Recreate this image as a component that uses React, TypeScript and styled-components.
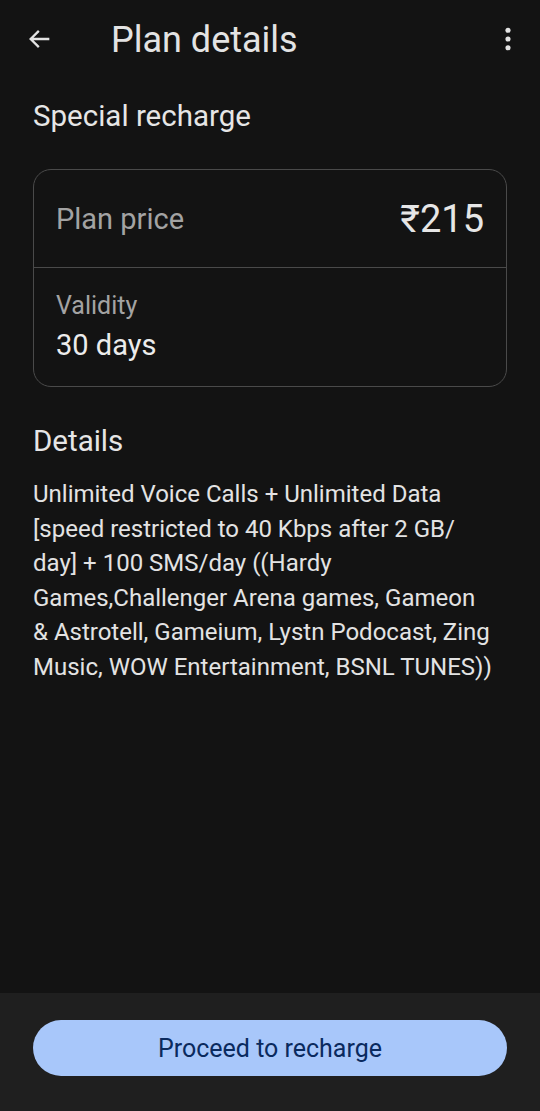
import { createGlobalStyle, styled } from 'styled-components';

const GlobalStyle = createGlobalStyle`
  html, body {
    margin: 0;
    padding: 0;
    background: #131313;
  }
  body {
    font-family: Roboto, "Noto Sans", "Liberation Sans", sans-serif;
    color: #e3e3e3;
  }
`;

const Screen = styled.div`
  width: 540px;
  height: 1111px;
  display: flex;
  flex-direction: column;
  background: #131313;
  overflow: hidden;
`;

const TopBar = styled.header`
  height: 78px;
  display: flex;
  align-items: center;
  padding: 0 16px 0 24px;
`;

const IconButton = styled.button`
  width: 32px;
  height: 32px;
  padding: 0;
  border: none;
  background: none;
  color: #e3e3e3;
  display: flex;
  align-items: center;
  justify-content: center;
`;

const Title = styled.h1`
  flex: 1;
  margin: 2px 0 0 55px;
  font-size: 36px;
  line-height: 40px;
  font-weight: 400;
  color: #e3e3e3;
`;

const Content = styled.main`
  flex: 1;
  padding: 0 33px;
`;

const SectionTitle = styled.h2<{ $top: number }>`
  margin: ${(p) => p.$top}px 0 0;
  font-size: 29.5px;
  line-height: 34px;
  font-weight: 400;
  color: #e6e6e6;
`;

const Card = styled.section`
  margin-top: 36px;
  border: 1px solid #4a4a4a;
  border-radius: 18px;
`;

const PriceRow = styled.div`
  height: 97px;
  display: flex;
  align-items: center;
  justify-content: space-between;
  padding: 0 22px;
  border-bottom: 1px solid #4a4a4a;
`;

const Label = styled.span<{ $size: number }>`
  font-size: ${(p) => p.$size}px;
  line-height: ${(p) => p.$size + 5}px;
  color: #a3a3a3;
`;

const Price = styled.span`
  font-size: 38px;
  color: #e6e6e6;
`;

const ValidityBlock = styled.div`
  padding: 23px 22px 24px;
  display: flex;
  flex-direction: column;
  gap: 7px;
`;

const Value = styled.span`
  font-size: 29px;
  line-height: 34px;
  color: #ececec;
`;

const Body = styled.p`
  margin: 19px 0 0;
  font-size: 24px;
  line-height: 34.6px;
  color: #e3e3e3;
  white-space: pre-line;
`;

const BottomBar = styled.footer`
  height: 118px;
  background: #1f1f1f;
  display: flex;
  justify-content: center;
  padding-top: 27px;
  box-sizing: border-box;
`;

const PrimaryButton = styled.button`
  width: 474px;
  height: 56px;
  border: none;
  border-radius: 28px;
  background: #a8c7fa;
  color: #0a2a5e;
  font-family: Roboto, "Noto Sans", sans-serif;
  font-size: 25px;
`;

const details = `Unlimited Voice Calls + Unlimited Data
[speed restricted to 40 Kbps after 2 GB/
day] + 100 SMS/day ((Hardy
Games,Challenger Arena games, Gameon
& Astrotell, Gameium, Lystn Podocast, Zing
Music, WOW Entertainment, BSNL TUNES))`;

const App = () => {
  return (
    <Screen>
      <GlobalStyle />
      <TopBar>
        <IconButton aria-label='Back'>
          <svg width='28' height='28' viewBox='0 0 24 24' fill='none'>
            <path d='M20 12H5M11 5l-7 7 7 7' stroke='#e3e3e3' strokeWidth='2' />
          </svg>
        </IconButton>
        <Title>Plan details</Title>
        <IconButton aria-label='More'>
          <svg width='28' height='28' viewBox='0 0 24 24' fill='#e3e3e3'>
            <circle cx='12' cy='4.5' r='2.2' />
            <circle cx='12' cy='12' r='2.2' />
            <circle cx='12' cy='19.5' r='2.2' />
          </svg>
        </IconButton>
      </TopBar>
      <Content>
        <SectionTitle $top={21}>Special recharge</SectionTitle>
        <Card>
          <PriceRow>
            <Label $size={29}>Plan price</Label>
            <Price>₹215</Price>
          </PriceRow>
          <ValidityBlock>
            <Label $size={25}>Validity</Label>
            <Value>30 days</Value>
          </ValidityBlock>
        </Card>
        <SectionTitle $top={37}>Details</SectionTitle>
        <Body>{details}</Body>
      </Content>
      <BottomBar>
        <PrimaryButton>Proceed to recharge</PrimaryButton>
      </BottomBar>
    </Screen>
  );
};

export default App;
